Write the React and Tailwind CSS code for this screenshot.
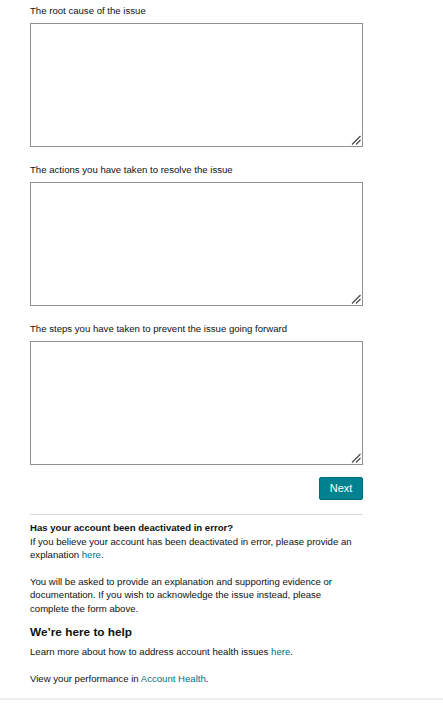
function Handle() {
  return (
    <svg className="absolute right-[2px] bottom-[2px]" width="10" height="10" viewBox="0 0 10 10">
      <line x1="1" y1="9.5" x2="9.5" y2="1" stroke="#4a4a4a" strokeWidth="1.2" />
      <line x1="5" y1="9.5" x2="9.5" y2="5" stroke="#4a4a4a" strokeWidth="1.2" />
    </svg>
  );
}

export default function App() {
  const labels = [
    "The root cause of the issue",
    "The actions you have taken to resolve the issue",
    "The steps you have taken to prevent the issue going forward",
  ];
  return (
    <div
      className="w-[443px] h-[712px] bg-white text-[#0f1111] overflow-hidden"
      style={{ fontFamily: '"Liberation Sans", Arial, sans-serif' }}
    >
      <div className="w-[333px] ml-[30px] pt-[4px]">
        {labels.map((l, i) => (
          <div key={i} className={i === 0 ? "" : "mt-[16px]"}>
            <div className="text-[9.6px] leading-[13px] mb-[6px]">{l}</div>
            <div className="relative">
              <textarea className="block w-[333px] h-[124px] border border-[#8d9096] bg-white outline-none resize-none"></textarea>
              <Handle />
            </div>
          </div>
        ))}
        <div className="flex justify-end mt-[12px]">
          <button className="h-[23px] w-[44px] bg-[#00818f] border border-[#006d78] rounded-[2px] text-white text-[11px] leading-none">
            Next
          </button>
        </div>
        <div className="mt-[14px] h-px bg-[#d5d9d9]"></div>
        <div className="mt-[6px] text-[9.6px] leading-[13.5px]">
          <div className="font-bold">Has your account been deactivated in error?</div>
          <div>If you believe your account has been deactivated in error, please provide an</div>
          <div>
            explanation <span className="text-[#007185]">here</span>.
          </div>
          <div className="mt-[13px]">You will be asked to provide an explanation and supporting evidence or</div>
          <div>documentation. If you wish to acknowledge the issue instead, please</div>
          <div>complete the form above.</div>
          <h3 className="mt-[9px] text-[11.8px] leading-[16px] font-bold">We’re here to help</h3>
          <div className="mt-[5px]">
            Learn more about how to address account health issues{" "}
            <span className="text-[#007185]">here</span>.
          </div>
          <div className="mt-[13px]">
            View your performance in <span className="text-[#007185]">Account Health</span>.
          </div>
        </div>
      </div>
      <div className="mt-[13px] h-[2px] bg-[#eeeeee]"></div>
    </div>
  );
}
